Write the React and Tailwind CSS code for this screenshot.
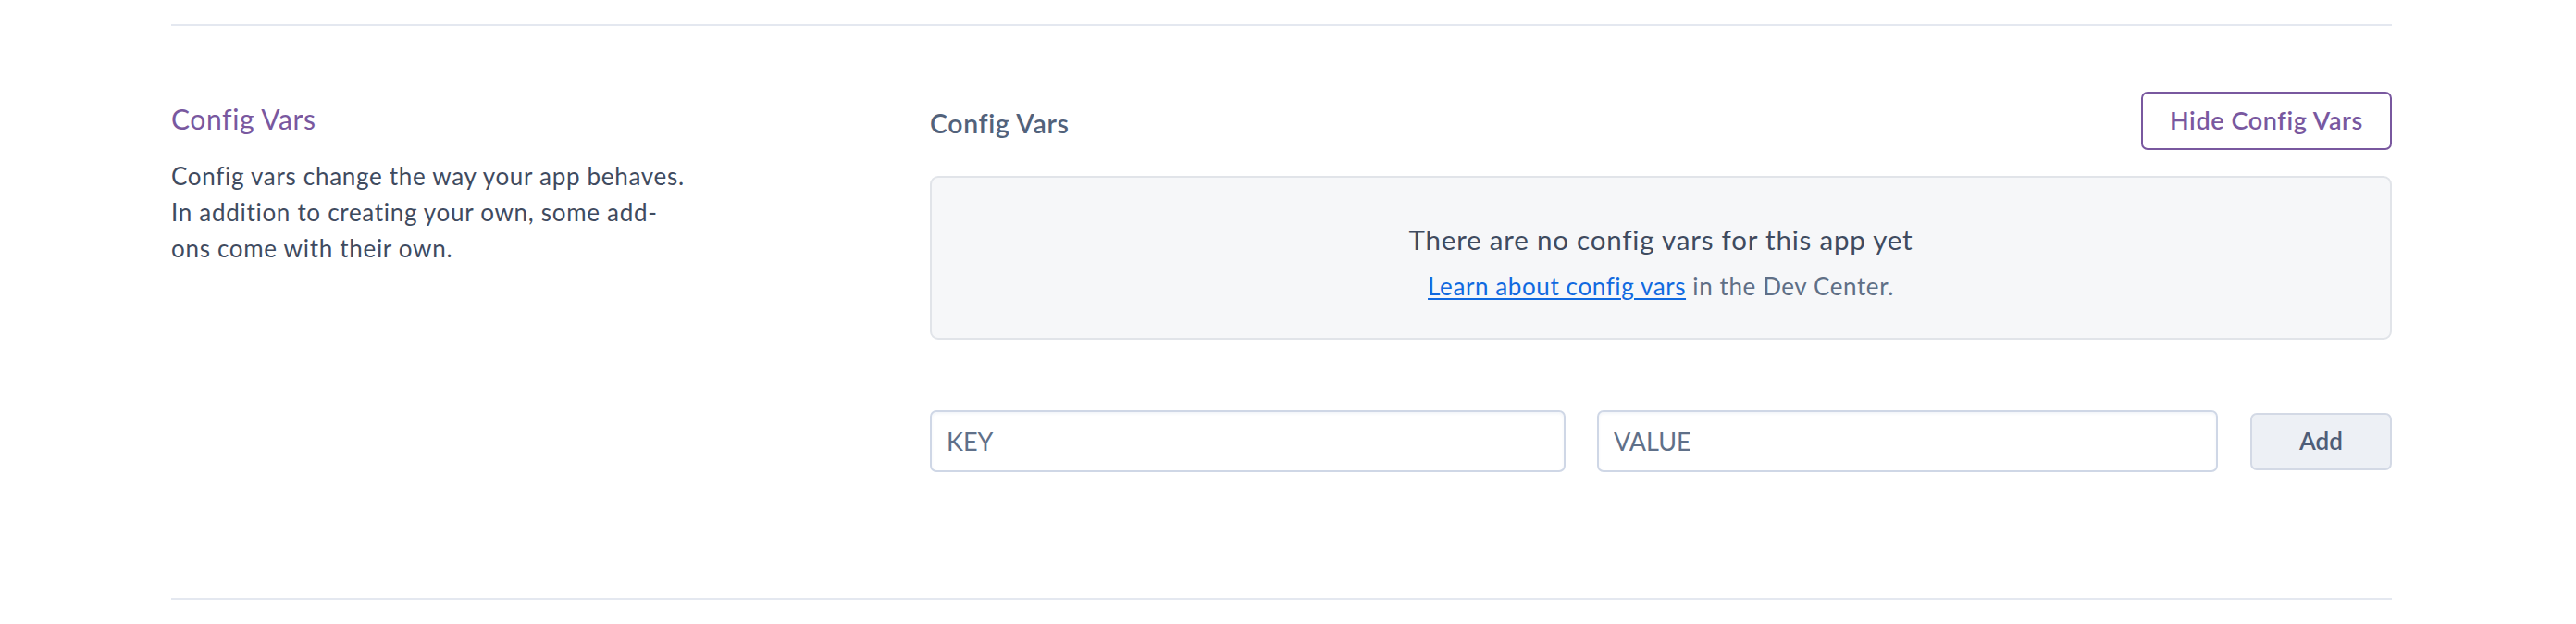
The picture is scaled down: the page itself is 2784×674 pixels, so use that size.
import React, { useState } from 'react';

const ConfigVars = () => {
  const [key, setKey] = useState('');
  const [value, setValue] = useState('');

  return (
    <div className="min-h-screen bg-white pt-[26px] font-['Lato',sans-serif]">
      <div className="ml-[185px] w-[2400px] border-y-2 border-[#e4e8f0] flex pt-[71px] pb-[136px]">
        <div className="w-[820px] shrink-0 pt-[11px]">
          <h3 className="text-[30px] leading-[36px] tracking-[0.6px] text-[#79589f]">Config Vars</h3>
          <p className="mt-[25px] max-w-[568px] text-[26px] leading-[39px] tracking-[0.7px] text-[#3f4b5f]">
            Config vars change the way your app behaves. In addition to creating your own, some add-ons come with their own.
          </p>
        </div>

        <div className="flex-1">
          <div className="flex items-center justify-between">
            <h4 className="mt-1 text-[28.4px] leading-[34px] tracking-[0.7px] font-semibold text-[#52627b]">Config Vars</h4>
            <button className="h-[63px] w-[271px] rounded-[7px] border-2 border-[#79589f] text-[27px] tracking-[0.6px] font-semibold text-[#79589f]">
              Hide Config Vars
            </button>
          </div>

          <div className="mt-[28px] h-[177px] rounded-[9px] border-2 border-[#e1e4e9] bg-[#f6f7f9] pt-[46px] text-center">
            <p className="text-[29.5px] leading-[42px] tracking-[0.8px] text-[#3f4b5f]">There are no config vars for this app yet</p>
            <p className="mt-[11px] text-[26px] leading-[37px] tracking-[0.6px] text-[#5f6f86]">
              <a href="#" className="text-[#1069e0] underline underline-offset-[3px]">Learn about config vars</a> in the Dev Center.
            </p>
          </div>

          <div className="mt-[76px] flex items-center">
            <input
              value={key}
              onChange={e => setKey(e.target.value)}
              placeholder="KEY"
              className="h-[67px] w-[687px] rounded-[7px] border-2 border-[#cfd7e6] px-[16px] text-[27px] text-[#3f4b5f] placeholder:text-[#5f7089] shadow-[inset_0_2px_3px_rgba(207,215,230,0.25)] outline-none"
            />
            <input
              value={value}
              onChange={e => setValue(e.target.value)}
              placeholder="VALUE"
              className="ml-[34px] h-[67px] flex-1 rounded-[7px] border-2 border-[#cfd7e6] px-[16px] text-[27px] text-[#3f4b5f] placeholder:text-[#5f7089] shadow-[inset_0_2px_3px_rgba(207,215,230,0.25)] outline-none"
            />
            <button className="ml-[35px] h-[62px] w-[153px] rounded-[7px] border-2 border-[#d3d9e5] bg-[#edf0f5] text-[26px] font-semibold text-[#4e5d78]">
              Add
            </button>
          </div>
        </div>
      </div>
    </div>
  );
};

export default ConfigVars;
